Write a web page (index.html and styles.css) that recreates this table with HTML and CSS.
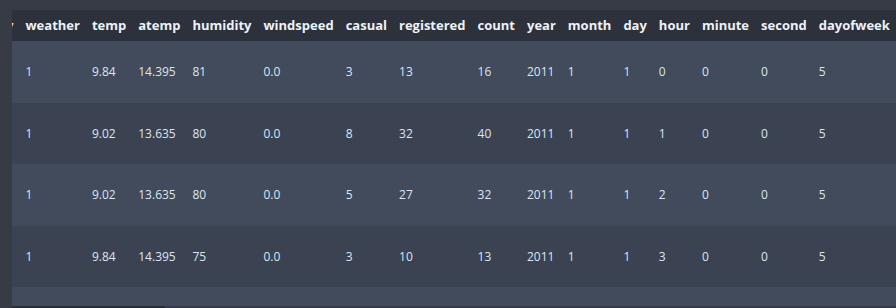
FILE: index.html
```html
<!DOCTYPE html>
<html>
<head>
<meta charset="utf-8">
<link rel="stylesheet" href="styles.css">
</head>
<body>
<div class="frame">
  <div class="viewport">
    <table class="df">
      <thead>
        <tr>
          <th>workingday</th><th>weather</th><th>temp</th><th>atemp</th><th>humidity</th><th>windspeed</th><th>casual</th><th>registered</th><th>count</th><th>year</th><th>month</th><th>day</th><th>hour</th><th>minute</th><th>second</th><th>dayofweek</th>
        </tr>
      </thead>
      <tbody>
        <tr class="odd">
          <td></td><td>1</td><td>9.84</td><td>14.395</td><td>81</td><td>0.0</td><td>3</td><td>13</td><td>16</td><td>2011</td><td>1</td><td>1</td><td>0</td><td>0</td><td>0</td><td>5</td>
        </tr>
        <tr class="even">
          <td></td><td>1</td><td>9.02</td><td>13.635</td><td>80</td><td>0.0</td><td>8</td><td>32</td><td>40</td><td>2011</td><td>1</td><td>1</td><td>1</td><td>0</td><td>0</td><td>5</td>
        </tr>
        <tr class="odd">
          <td></td><td>1</td><td>9.02</td><td>13.635</td><td>80</td><td>0.0</td><td>5</td><td>27</td><td>32</td><td>2011</td><td>1</td><td>1</td><td>2</td><td>0</td><td>0</td><td>5</td>
        </tr>
        <tr class="even">
          <td></td><td>1</td><td>9.84</td><td>14.395</td><td>75</td><td>0.0</td><td>3</td><td>10</td><td>13</td><td>2011</td><td>1</td><td>1</td><td>3</td><td>0</td><td>0</td><td>5</td>
        </tr>
        <tr class="odd">
          <td></td><td></td><td></td><td></td><td></td><td></td><td></td><td></td><td></td><td></td><td></td><td></td><td></td><td></td><td></td><td></td>
        </tr>
      </tbody>
    </table>
  </div>
  <div class="track"><div class="thumb"></div></div>
</div>
</body>
</html>
```

FILE: styles.css
```css
html, body {
  margin: 0;
  padding: 0;
  background: #363b46;
  overflow: hidden;
}

.frame {
  padding: 10px 0 0 12px;
  height: 298px;
  display: flex;
  flex-direction: column;
}

.viewport {
  height: 296px;
  overflow: hidden;
}

.df {
  border-collapse: collapse;
  border-spacing: 0;
  margin-left: -81px;
  font-family: "Open Sans", "DejaVu Sans", sans-serif;
  white-space: nowrap;
}

.df th {
  background: #2c313b;
  color: #eef2f8;
  font-size: 13px;
  font-weight: 700;
  text-align: left;
  padding: 6px 6px;
  line-height: 19px;
}

.df td {
  color: #dce5f1;
  font-size: 12px;
  font-weight: 400;
  text-align: left;
  padding: 22px 6px;
  line-height: 17.5px;
  height: 17.5px;
}

.df th:last-child,
.df td:last-child {
  padding-right: 24px;
}

.df tr.odd td {
  background: #414b5b;
}

.df tr.even td {
  background: #3b4353;
}

.track {
  height: 2px;
  background: #363c48;
}

.thumb {
  width: 153px;
  height: 2px;
  background: #2a2e36;
}
```
